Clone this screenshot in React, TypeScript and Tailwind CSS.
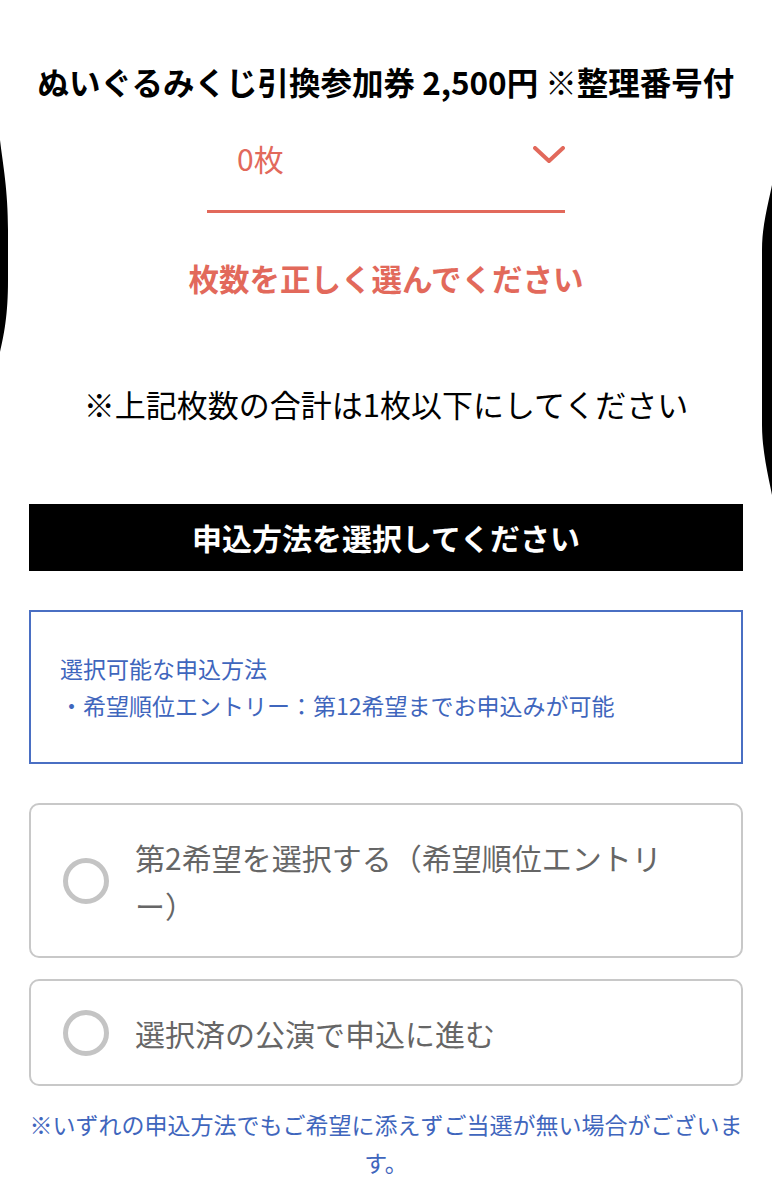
import { useState } from 'react';

const CORAL = 'text-[#e2695b]';

const RadioCard = ({
  children,
  checked,
  onClick,
}: {
  children: React.ReactNode;
  checked: boolean;
  onClick: () => void;
}) => (
  <button
    type="button"
    onClick={onClick}
    className="flex w-full items-center gap-[26px] rounded-[10px] border-2 border-[#c8c8c8] bg-white pb-[27px] pl-[32px] pr-[40px] pt-[28px] text-left"
  >
    <span className="flex h-[46px] w-[46px] shrink-0 items-center justify-center rounded-full border-[5px] border-[#c4c4c4]">
      {checked && <span className="h-[20px] w-[20px] rounded-full bg-[#c4c4c4]" />}
    </span>
    <span className="text-[30px] leading-[48px] text-[#666666]">{children}</span>
  </button>
);

export default function App() {
  const [method, setMethod] = useState<string | null>(null);

  return (
    <div
      className="relative min-h-[1200px] w-full overflow-hidden bg-white px-[29px] pb-10 pt-[61px]"
      style={{ fontFamily: '"Noto Sans CJK JP", "Noto Sans", sans-serif' }}
    >
      {/* 券種 */}
      <h2 className="whitespace-nowrap text-center text-[31.5px] font-bold leading-[40px] text-black">
        ぬいぐるみくじ引換参加券 2,500円 ※整理番号付
      </h2>

      {/* 枚数セレクト */}
      <div className={`mx-auto mt-[37px] flex w-[358px] items-center justify-between border-b-[3px] border-[#e2695b] pb-[32px] pl-[30px] ${CORAL}`}>
        <span className="text-[30px] leading-[40px]">0枚</span>
        <svg width="32" height="18" viewBox="0 0 32 18" className="mb-[6px]">
          <polyline
            points="2,2 16,15 30,2"
            fill="none"
            stroke="#e2695b"
            strokeWidth="4"
            strokeLinecap="round"
            strokeLinejoin="round"
          />
        </svg>
      </div>

      <p className={`mt-[45px] text-center text-[30.5px] font-bold leading-[40px] ${CORAL}`}>
        枚数を正しく選んでください
      </p>

      <p className="mt-[86px] text-center text-[31px] leading-[40px] text-black">
        ※上記枚数の合計は1枚以下にしてください
      </p>

      {/* 申込方法 */}
      <div className="mt-[80px] flex h-[67px] items-center justify-center bg-black">
        <span className="text-[30px] font-bold text-white">申込方法を選択してください</span>
      </div>

      <div className="mt-[39px] border-2 border-[#4a6fc3] px-[29px] pb-[38px] pt-[38px] text-[23px] leading-[37px] text-[#3f66bd]">
        <p>選択可能な申込方法</p>
        <p>・希望順位エントリー：第12希望までお申込みが可能</p>
      </div>

      <div className="mt-[39px]">
        <RadioCard checked={method === 'rank'} onClick={() => setMethod('rank')}>
          第2希望を選択する（希望順位エントリ
          <br />
          ー）
        </RadioCard>
      </div>
      <div className="mt-[21px]">
        <RadioCard checked={method === 'selected'} onClick={() => setMethod('selected')}>
          選択済の公演で申込に進む
        </RadioCard>
      </div>

      <p className="-mx-[1px] mt-[19px] text-center text-[23px] leading-[38px] text-[#3f66bd]">
        ※いずれの申込方法でもご希望に添えずご当選が無い場合がございます。
      </p>

      {/* 画面端の黒い影 */}
      <svg
        className="pointer-events-none absolute left-0 top-0"
        width="772"
        height="1200"
        viewBox="0 0 772 1200"
      >
        <path d="M0 140 C3 165 8 190 8 230 L8 280 C8 315 4 335 0 352 Z" fill="#000" />
        <path d="M772 185 C768 205 762 225 762 250 L762 425 C762 450 768 475 772 495 Z" fill="#000" />
      </svg>
    </div>
  );
}
